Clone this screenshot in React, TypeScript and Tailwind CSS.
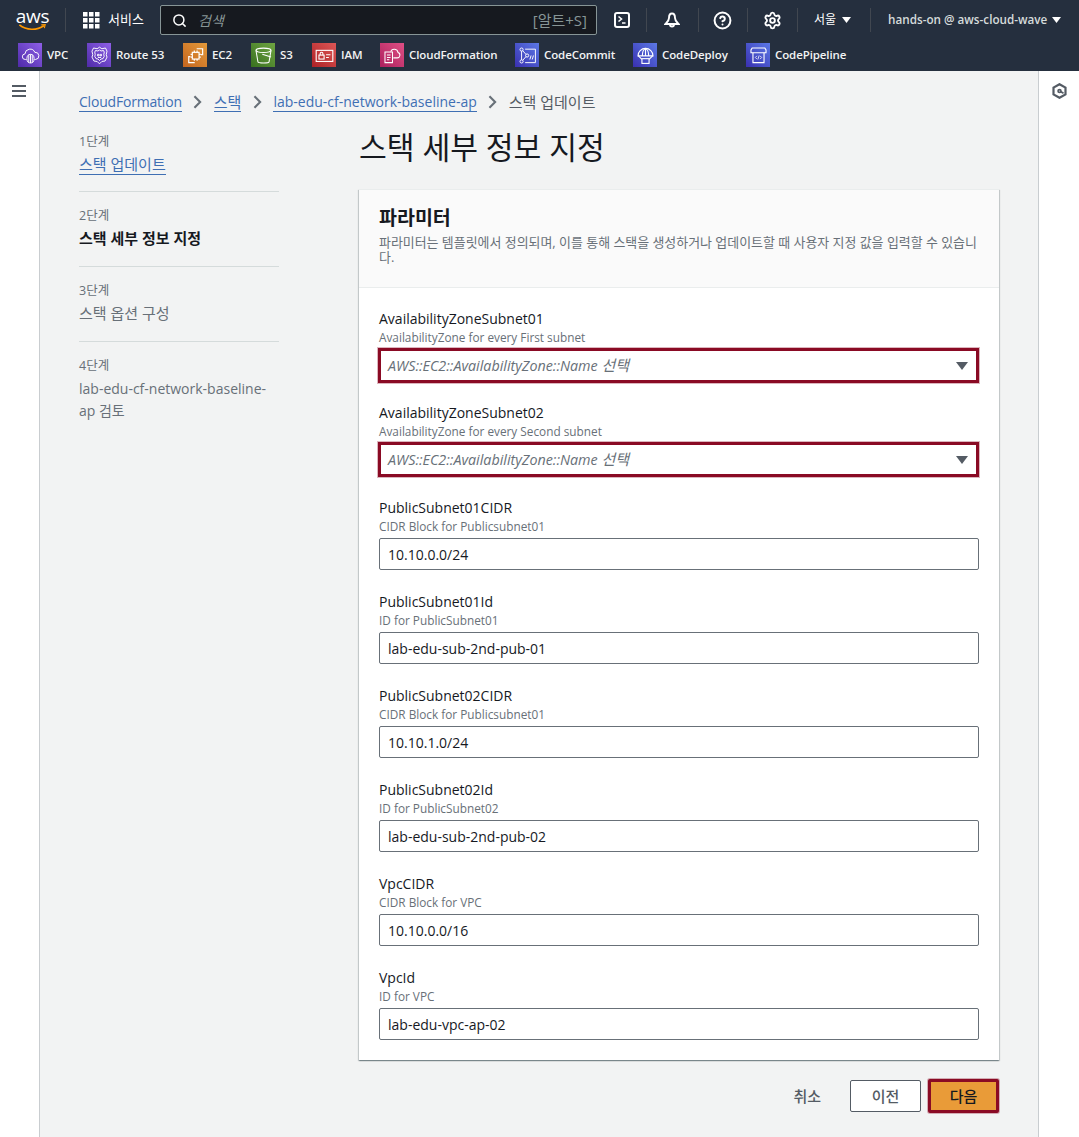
import { CircleHelp, Search, Settings } from "lucide-react";

const services = [
  { name: "VPC", width: "w-[69px]", tone: "from-[#4f2aa8] to-[#8f5fe8]", icon: "vpc" },
  { name: "Route 53", width: "w-[96px]", tone: "from-[#4f2aa8] to-[#8f5fe8]", icon: "route" },
  { name: "EC2", width: "w-[68px]", tone: "from-[#c4651f] to-[#e49a3a]", icon: "ec2" },
  { name: "S3", width: "w-[61px]", tone: "from-[#38701f] to-[#6fa542]", icon: "s3" },
  { name: "IAM", width: "w-[68px]", tone: "from-[#ac2026] to-[#de5656]", icon: "iam" },
  { name: "CloudFormation", width: "w-[135px]", tone: "from-[#ac1f5e] to-[#e04f85]", icon: "cf" },
  { name: "CodeCommit", width: "w-[118px]", tone: "from-[#3a2fb0] to-[#5c78e6]", icon: "commit" },
  { name: "CodeDeploy", width: "w-[113px]", tone: "from-[#3a2fb0] to-[#5c78e6]", icon: "deploy" },
  { name: "CodePipeline", width: "w-[110px]", tone: "from-[#3a2fb0] to-[#5c78e6]", icon: "pipeline" },
];

const steps = [
  { no: "1단계", label: "스택 업데이트", kind: "link" },
  { no: "2단계", label: "스택 세부 정보 지정", kind: "current" },
  { no: "3단계", label: "스택 옵션 구성", kind: "todo" },
  { no: "4단계", label: "lab-edu-cf-network-baseline-ap 검토", kind: "todo" },
];

const selects = [
  { label: "AvailabilityZoneSubnet01", hint: "AvailabilityZone for every First subnet" },
  { label: "AvailabilityZoneSubnet02", hint: "AvailabilityZone for every Second subnet" },
];

const fields = [
  { label: "PublicSubnet01CIDR", hint: "CIDR Block for Publicsubnet01", value: "10.10.0.0/24" },
  { label: "PublicSubnet01Id", hint: "ID for PublicSubnet01", value: "lab-edu-sub-2nd-pub-01" },
  { label: "PublicSubnet02CIDR", hint: "CIDR Block for Publicsubnet01", value: "10.10.1.0/24" },
  { label: "PublicSubnet02Id", hint: "ID for PublicSubnet02", value: "lab-edu-sub-2nd-pub-02" },
  { label: "VpcCIDR", hint: "CIDR Block for VPC", value: "10.10.0.0/16" },
  { label: "VpcId", hint: "ID for VPC", value: "lab-edu-vpc-ap-02" },
];

function ServiceGlyph({ kind }: { kind: string }) {
  return (
    <svg viewBox="0 0 24 24" className="h-[19px] w-[19px]" fill="none" stroke="white" strokeWidth="1.2">
      {kind === "vpc" && (
        <>
          <path d="M7 17H5.500a3.500 3.500 0 0 1-.5-7A6.500 6.500 0 0 1 17.500 8a4.500 4.500 0 0 1 1 9H17" />
          <ellipse cx="12" cy="16" rx="4.500" ry="5.500" />
          <path d="M12 10.500v11M9.800 11.500v9M14.200 11.500v9" />
        </>
      )}
      {kind === "route" && (
        <>
          <path d="M12 1.500l3 2 4.500-1 2 4-1 4.500 1 3-2.500 5-4 .5-3 3-3-3-4-.5-2.500-5 1-3-1-4.500 2-4 4.500 1z" />
          <path d="M12 5l2 1.300 3-.6 1 2-.6 3.300.6 2-1.600 3-2.400.4-2 2-2-2-2.400-.4-1.600-3 .6-2-.6-3.300 1-2 3 .6z" />
          <path d="M9.500 10.500h2v2h-2zM13 10.500h1.500v2H13zM10 14.500h4" />
        </>
      )}
      {kind === "ec2" && (
        <g strokeWidth="1.500">
          <rect x="8" y="8" width="8.500" height="8.500" />
          <path d="M10.500 8V5.800M14 8V5.800M10.500 18.700v-2.200M14 18.700v-2.200M8 10.500H5.800M8 14H5.800M18.700 10.500h-2.200M18.700 14h-2.200" />
          <path d="M13.500 3.500H21V11h-2M11 21H3.500v-7.500H5.500" />
        </g>
      )}
      {kind === "s3" && (
        <g strokeWidth="1.300">
          <ellipse cx="12" cy="5.500" rx="9.500" ry="2.800" />
          <path d="M2.500 5.500L5 20c.3 1.800 13.700 1.800 14 0l2.500-14.500" />
          <path d="M10.500 10.500l11 3.500" />
        </g>
      )}
      {kind === "iam" && (
        <g strokeWidth="1.400">
          <rect x="1.500" y="5.500" width="21" height="14" />
          <rect x="5" y="11.500" width="6.500" height="5" />
          <path d="M6.500 11.500V9.700a1.750 1.750 0 0 1 3.500 0v1.800M14 11h5.500M14 14.500h3.500" />
        </g>
      )}
      {kind === "cf" && (
        <g strokeWidth="1.300">
          <path d="M13 15h5a3.500 3.500 0 0 0 1-6.800 5 5 0 0 0-9.300-1.400" />
          <path d="M2.500 7.500H12v13.500H2.500z" />
          <path d="M5 11.500h4.500M5 14.500h4.500M5 17.500h3" />
        </g>
      )}
      {kind === "commit" && (
        <>
          <circle cx="4.500" cy="4.500" r="2" />
          <circle cx="4.500" cy="19.500" r="2" />
          <circle cx="11.500" cy="12" r="2" />
          <path d="M4.500 6.500v11M6 6l4 4.500M6 18l4-4.500M9 4h13v17H9" />
          <path d="M15 17l1.500-5M18 17l1.500-5" />
        </>
      )}
      {kind === "deploy" && (
        <g strokeWidth="1.400">
          <path d="M2.500 12.500a9.500 9.500 0 0 1 19 0z" />
          <path d="M8 12.500C8 7.500 10 4 12 3c2 1 4 4.500 4 9.500M12 3v9.500" />
          <path d="M3 12.500l4.500 4.500M21 12.500L16.500 17" />
          <rect x="7.500" y="16" width="9" height="6" />
        </g>
      )}
      {kind === "pipeline" && (
        <g strokeWidth="1.400">
          <path d="M4 2.500h16l1.500 2.500v3.500h-19V5z" />
          <path d="M5 8.500V21h14V8.500" />
          <path d="M10 12.500l-2 2 2 2M14 12.500l2 2-2 2M12.800 12l-1.600 5" strokeWidth="1" />
        </g>
      )}
    </svg>
  );
}

function Caret({ className }: { className: string }) {
  return (
    <svg viewBox="0 0 12 8" className={className} fill="currentColor">
      <path d="M0 0h12L6 8z" />
    </svg>
  );
}

function GridIcon() {
  return (
    <svg viewBox="0 0 17 17" className="h-[17px] w-[17px]" fill="white">
      {[0, 6, 12].map((y) =>
        [0, 6, 12].map((x) => <rect key={`${x}-${y}`} x={x} y={y} width="4.500" height="4.500" />),
      )}
    </svg>
  );
}

function Divider() {
  return <span className="h-[24px] w-px shrink-0 bg-[#414750]" />;
}

function TopNav() {
  return (
    <header className="h-[71px] bg-[#252f3e] text-white">
      <div className="flex h-10 items-center">
        <div className="ml-[17px] flex w-[31px] shrink-0 flex-col items-center">
          <span className="text-[19px] leading-[15px] tracking-[-0.3px]">aws</span>
          <svg viewBox="0 0 32 8" className="h-[7px] w-[31px]" fill="none">
            <path d="M1 1c8 6.500 20 6.500 28 1" stroke="#ff9900" strokeWidth="1.800" />
            <path d="M26 1l4.500-.3-1 4" stroke="#ff9900" strokeWidth="1.300" />
          </svg>
        </div>
        <span className="ml-[17px] flex"><Divider /></span>
        <span className="ml-[17px] flex"><GridIcon /></span>
        <span className="ml-2 w-[52px] text-[13px]">서비스</span>
        <div className="flex h-[30px] w-[437px] shrink-0 items-center rounded-[2px] border border-[#879596] bg-[#16191f] pl-[11px] pr-[9px]">
          <Search className="h-[15px] w-[15px] text-white" strokeWidth={2.4} />
          <span className="ml-[11px] flex-1 text-[14px] italic text-[#879596]">검색</span>
          <span className="text-[15px] text-[#879596]">[알트+S]</span>
        </div>
        <svg viewBox="0 0 16 16" className="ml-[17px] h-4 w-4" fill="none" stroke="white" strokeWidth="2">
          <rect x="1" y="1" width="14" height="14" rx="2" />
          <path d="M4.500 4.500L7.500 7l-3 2.500M8 11h3.500" strokeWidth="1.600" />
        </svg>
        <span className="ml-[16px] flex"><Divider /></span>
        <svg viewBox="0 0 16 16" className="ml-[17px] h-4 w-4" fill="none" stroke="white" strokeWidth="1.900">
          <path d="M8 1.500C5.800 1.500 5 3.800 5 6c0 2.600-2 4.300-3.500 6h13C13 10.300 11 8.600 11 6c0-2.200-.8-4.500-3-4.500z" />
          <path d="M6 12.500a2 2 0 0 0 4 0" />
        </svg>
        <span className="ml-[18px] flex"><Divider /></span>
        <CircleHelp className="ml-[14px] h-[19px] w-[19px]" strokeWidth={2.5} />
        <span className="ml-[15px] flex"><Divider /></span>
        <Settings className="ml-[15px] h-[19px] w-[19px]" strokeWidth={2.4} />
        <span className="ml-[15px] flex"><Divider /></span>
        <span className="ml-[16px] text-[12px]">서울</span>
        <Caret className="ml-[6px] h-[6px] w-[9px]" />
        <span className="ml-[19px] flex"><Divider /></span>
        <span className="ml-[17px] whitespace-nowrap text-[11.700px] font-semibold text-[#d5dbdb]">hands-on @ aws-cloud-wave</span>
        <Caret className="ml-[5px] h-[6px] w-[9px]" />
      </div>
      <div className="flex pl-[18px] pt-[3px]">
        {services.map((s) => (
          <div key={s.name} className={`flex shrink-0 items-center gap-[5px] ${s.width}`}>
            <span className={`flex h-6 w-6 shrink-0 items-center justify-center bg-linear-to-tr ${s.tone}`}>
              <ServiceGlyph kind={s.icon} />
            </span>
            <span className="whitespace-nowrap text-[11.500px] font-semibold leading-6 tracking-[-0.1px] text-[#f2f3f3]">{s.name}</span>
          </div>
        ))}
      </div>
    </header>
  );
}

function StepList() {
  return (
    <ol className="w-[200px] shrink-0">
      {steps.map((s, i) => (
        <li
          key={s.no}
          className={i === 0 ? "h-[71px] border-b border-[#d5dbdb] pt-[11px]" : i < 3 ? "h-[75px] border-b border-[#d5dbdb] pt-[14px]" : "pt-[14px]"}
        >
          <div className="text-[12.500px] leading-[20px] text-[#687078]">{s.no}</div>
          <div
            className={
              s.kind === "link"
                ? "-mt-px inline-block border-b border-[#3f6fb3] text-[15px] leading-[20px] text-[#3f6fb3]"
                : s.kind === "current"
                  ? "mt-[1px] text-[15px] font-bold leading-[22px] text-[#16191f]"
                  : i === 3
                    ? "mt-[2px] text-[14px] leading-[22px] text-[#687078]"
                    : "mt-[1px] text-[15px] leading-[22px] text-[#687078]"
            }
          >
            {s.label}
          </div>
        </li>
      ))}
    </ol>
  );
}

function FieldHead({ label, hint }: { label: string; hint: string }) {
  return (
    <>
      <div className="text-[14px] leading-[20px] text-[#16191f]">{label}</div>
      <div className="text-[11.800px] leading-[16px] text-[#687078]">{hint}</div>
    </>
  );
}

function Params() {
  return (
    <section className="border-t border-[#eaeded] bg-white shadow-[0_1px_1px_0_rgba(0,28,36,0.3),1px_1px_1px_0_rgba(0,28,36,0.15),-1px_1px_1px_0_rgba(0,28,36,0.15)]">
      <div className="h-[98px] border-b border-[#eaeded] bg-[#fafafa] px-5 pt-[16px]">
        <h2 className="text-[19.500px] font-bold leading-[24px] text-[#16191f]">파라미터</h2>
        <p className="mt-[5px] text-[12.950px] leading-[15px] text-[#687078]">
          파라미터는 템플릿에서 정의되며, 이를 통해 스택을 생성하거나 업데이트할 때 사용자 지정 값을 입력할 수 있습니다.
        </p>
      </div>
      <div className="flex flex-col gap-[22px] px-5 pb-5 pt-[21px]">
        {selects.map((f, i) => (
          <div key={f.label} className={i === 1 ? "mb-px" : ""}>
            <FieldHead label={f.label} hint={f.hint} />
            <div className="mt-[4px] flex h-8 flex-col">
              <div className="-mt-px -ml-px flex h-[35px] shrink-0 items-center border-[3px] border-[#8a0a24] bg-white pl-[7px] pr-[8px] shadow-[0_0_0_1px_rgba(138,10,36,0.3)]">
                <span className="flex-1 text-[14.300px] italic text-[#687078]">
                  AWS::EC2::AvailabilityZone::Name <span className="text-[15px]">선택</span>
                </span>
                <Caret className="h-2 w-3 text-[#545b64]" />
              </div>
            </div>
          </div>
        ))}
        {fields.map((f) => (
          <div key={f.label}>
            <FieldHead label={f.label} hint={f.hint} />
            <div className="mt-[4px] flex h-8 items-center rounded-[2px] border border-[#687078] bg-white px-[8px] text-[14px] text-[#16191f]">
              {f.value}
            </div>
          </div>
        ))}
      </div>
    </section>
  );
}

function Chevron() {
  return (
    <svg viewBox="0 0 10 16" className="mx-[11.500px] h-[14px] w-[9px]" fill="none" stroke="#687078" strokeWidth="2.400">
      <path d="M1.500 1.500L8 8l-6.500 6.500" />
    </svg>
  );
}

export default function App() {
  return (
    <div className="flex h-[1137px] flex-col overflow-hidden bg-[#f2f3f3] font-['Open_Sans','Noto_Sans_CJK_KR',sans-serif]">
      <TopNav />
      <div className="flex min-h-0 flex-1">
        <aside className="w-10 shrink-0 border-r border-[#c9cdd0] bg-white pl-3 pt-[14px]">
          <svg viewBox="0 0 14 12" className="h-3 w-[14px]" fill="#545b64">
            <rect width="14" height="2" />
            <rect y="5" width="14" height="2" />
            <rect y="10" width="14" height="2" />
          </svg>
        </aside>
        <main className="min-w-0 flex-1 pl-[39px] pr-[39px]">
          <nav className="mt-[20px] flex h-[22px] items-center text-[14px] text-[#3f6fb3]">
            <span className="border-b border-[#3f6fb3] leading-[18px] tracking-[-0.2px]">CloudFormation</span>
            <Chevron />
            <span className="border-b border-[#3f6fb3] text-[15px] leading-[18px]">스택</span>
            <Chevron />
            <span className="border-b border-[#3f6fb3] leading-[18px]">lab-edu-cf-network-baseline-ap</span>
            <Chevron />
            <span className="text-[15px] leading-[18px] text-[#545b64]">스택 업데이트</span>
          </nav>
          <div className="mt-[7px] flex">
            <div className="mt-[1px]"><StepList /></div>
            <div className="ml-[80px] w-[640px] shrink-0">
              <h1 className="h-[69px] pt-[8px] text-[30.200px] leading-[40px] text-[#16191f]">스택 세부 정보 지정</h1>
              <Params />
              <div className="mt-[19px] flex items-center justify-end">
                <span className="text-[15px] font-medium text-[#545b64]">취소</span>
                <span className="ml-[29px] flex h-8 w-[71px] items-center justify-center rounded-[2px] border border-[#545b64] bg-white text-[15px] font-medium text-[#545b64]">이전</span>
                <span className="ml-[7px] flex h-[34px] w-[71px] items-center justify-center rounded-[2px] border-[3px] border-[#8a0a24] bg-[#e99b38] text-[15px] font-medium text-[#16191f] shadow-[0_0_0_1px_rgba(138,10,36,0.3)]">다음</span>
              </div>
            </div>
          </div>
        </main>
        <aside className="w-[41px] shrink-0 border-l border-[#c9cdd0] bg-white pl-[13px] pt-[12px]">
          <svg viewBox="0 0 15 16" className="h-4 w-[15px]" fill="none" stroke="#545b64" strokeWidth="2.200">
            <path d="M7.500 1.200l6 3.400v6.800l-6 3.400-6-3.400V4.600z" />
            <circle cx="7.500" cy="8" r="1.400" strokeWidth="1.800" />
            <path d="M8.500 8.500l3 1.700" strokeWidth="1.800" />
          </svg>
        </aside>
      </div>
    </div>
  );
}
